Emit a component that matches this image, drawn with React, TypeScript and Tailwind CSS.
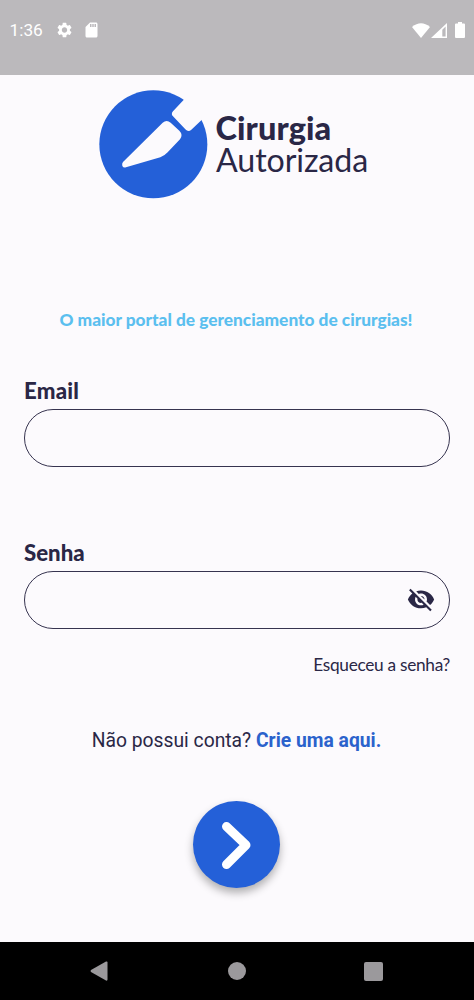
import { useState } from "react";
import { IoMdEyeOff } from "react-icons/io";

function StatusBar() {
  return (
    <header className="flex h-[75px] shrink-0 items-start justify-between bg-[#bbb9bc] pl-[9.500px] pr-[9px] pt-[20px] text-white">
      <div className="flex h-5 items-center">
        <span className="w-[45px] whitespace-nowrap font-['Roboto',sans-serif] text-[17.3px] leading-5">1:36</span>
        <svg className="h-[18px] w-[19px]" viewBox="0 0 24 24" fill="currentColor">
          <path d="M19.14 12.94c.04-.3.06-.61.06-.94 0-.32-.02-.64-.07-.94l2.03-1.58a.49.49 0 0 0 .12-.61l-1.92-3.32a.488.488 0 0 0-.59-.22l-2.39.96c-.5-.38-1.03-.7-1.62-.94l-.36-2.54a.484.484 0 0 0-.48-.41h-3.84c-.24 0-.43.17-.47.41l-.36 2.54c-.59.24-1.13.57-1.62.94l-2.39-.96c-.22-.08-.47 0-.59.22L2.74 8.87c-.12.21-.08.47.12.61l2.03 1.58c-.05.3-.09.63-.09.94s.02.64.07.94l-2.03 1.58a.49.49 0 0 0-.12.61l1.92 3.32c.12.22.37.29.59.22l2.39-.96c.5.38 1.03.7 1.62.94l.36 2.54c.05.24.24.41.48.41h3.84c.24 0 .44-.17.47-.41l.36-2.54c.59-.24 1.13-.56 1.62-.94l2.39.96c.22.08.47 0 .59-.22l1.92-3.32c.12-.22.07-.47-.12-.61l-2.01-1.58zM12 15.6c-1.98 0-3.6-1.62-3.6-3.6s1.62-3.6 3.6-3.6 3.6 1.62 3.6 3.6-1.62 3.6-3.6 3.6z" />
        </svg>
        <svg className="ml-2 h-[18px] w-[19px]" viewBox="0 0 24 24" fill="currentColor">
          <path d="M18 2h-8L4.020 8 4 20c0 1.100.9 2 2 2h12c1.100 0 2-.9 2-2V4c0-1.100-.9-2-2-2zm-6 6h-2V4h2v4zm3 0h-2V4h2v4zm3 0h-2V4h2v4z" />
        </svg>
      </div>
      <div className="flex h-5 items-center">
        <svg className="h-[15px] w-[18px]" viewBox="0 0 18 15" fill="currentColor">
          <path d="M0 4Q9-3.500 18 4L9 15Z" />
        </svg>
        <svg className="ml-[1px] h-[15px] w-[16px]" viewBox="0 0 16 15" fill="currentColor">
          <path fillRule="evenodd" d="M0 15 16 0V15ZM11.300 6.800V13.500H14.600V3.600Z" />
        </svg>
        <svg className="ml-[8px] h-[16px] w-[10px]" viewBox="0 0 10 16" fill="currentColor">
          <path d="M3 0H7V1.600H9Q10 1.600 10 2.600V15Q10 16 9 16H1Q0 16 0 15V2.600Q0 1.600 1 1.600H3Z" />
        </svg>
      </div>
    </header>
  );
}

function Logo() {
  return (
    <div className="ml-[99px] mt-[15px] flex h-[109px] items-start">
      <svg className="h-[109px] w-[109px] shrink-0" viewBox="27 29 327 327">
        <circle cx="190" cy="192" r="162" fill="#2460d8" />
        <path
          fill="#fcfafd"
          d="M280 60 249 93Q242 101 249 108L286 147Q295 156 304 148L334 120L365 90L310 30Z"
        />
        <path
          fill="#fcfafd"
          d="M218 127Q230 117 242 127L268 151Q280 163 270 177L233 216Q224 226 211 231L108 261Q100 263 97 257Q95 250 99 245Z"
        />
      </svg>
      <div className="ml-[7.500px] mt-[22px] font-['Lato',sans-serif] text-[#2a2746]">
        <div className="text-[32.5px] font-black leading-8 tracking-[0.100px]">Cirurgia</div>
        <div className="ml-[0.500px] text-[32.2px] font-normal leading-8 tracking-[-0.100px]">Autorizada</div>
      </div>
    </div>
  );
}

export default function App() {
  const [hidden, setHidden] = useState(true);
  return (
    <div className="flex h-[1000px] w-[474px] flex-col overflow-hidden bg-[#fcfafd] font-['Lato',sans-serif] text-[#2a2746]">
      <StatusBar />
      <main className="flex grow flex-col">
        <Logo />
        <p className="mr-[2px] mt-[109px] whitespace-nowrap text-center text-[17.3px] font-black leading-6 text-[#5bbfef]">
          O maior portal de gerenciamento de cirurgias!
        </p>
        <form className="flex flex-col px-6" onSubmit={(e) => e.preventDefault()}>
          <label htmlFor="email" className="mt-[45px] text-[22.200px] font-black leading-7 tracking-[0.200px]">Email</label>
          <input
            id="email"
            className="mt-[4px] h-[58px] w-full rounded-full border-[1.300px] border-[#36334f] bg-transparent px-6 outline-none"
          />
          <label htmlFor="password" className="mt-[72px] text-[22.200px] font-black leading-7">Senha</label>
          <div className="mt-[4px] flex h-[58px] items-center rounded-full border-[1.300px] border-[#36334f] pl-6 pr-[13px]">
            <input id="password" type={hidden ? "password" : "text"} className="min-w-0 grow bg-transparent outline-none" />
            <button type="button" onClick={() => setHidden(!hidden)}>
              <IoMdEyeOff className="h-[30px] w-[30px]" />
            </button>
          </div>
          <a className="mt-[24px] self-end whitespace-nowrap text-[17.300px] leading-6 tracking-[-0.300px]">Esqueceu a senha?</a>
          <p className="mr-[1px] mt-[52px] whitespace-nowrap text-center font-['Roboto',sans-serif] text-[19.300px] leading-6">
            Não possui conta? <a className="font-bold text-[#2b62cc]">Crie uma aqui.</a>
          </p>
          <button className="mt-[48px] mr-[1px] flex h-[87px] w-[87px] items-center justify-center self-center rounded-full bg-[#2460d8] shadow-[0_5px_8px_rgba(0,0,0,0.3)]">
            <svg className="h-[87px] w-[87px]" viewBox="0 0 87 87" fill="none">
              <path d="M33.500 25.500 53 44 33.500 63.500" stroke="white" strokeWidth="9" strokeLinecap="round" strokeLinejoin="round" />
            </svg>
          </button>
        </form>
      </main>
      <nav className="flex h-[58px] shrink-0 items-center justify-between bg-black pl-[90px] pr-[91px] text-[#9b999c]">
        <svg className="h-5 w-[19px]" viewBox="0 0 19 20" fill="currentColor">
          <path d="M1 9 16 .500Q17.500 0 17.500 1.500V18.500Q17.500 20 16 19.500L1 11Q0 10 1 9Z" />
        </svg>
        <div className="h-[18px] w-[18px] rounded-full bg-[#9b999c]" />
        <div className="h-[19px] w-[19px] rounded-[2px] bg-[#9b999c]" />
      </nav>
    </div>
  );
}
